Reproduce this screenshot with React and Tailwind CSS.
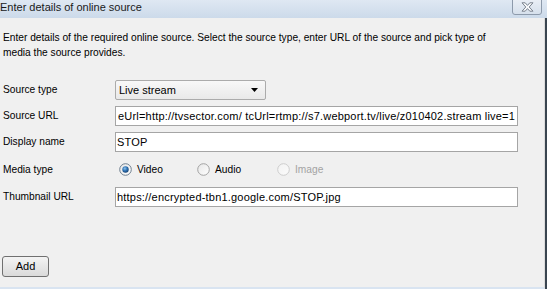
import React from "react";

function Radio({ checked, disabled }) {
  return (
    <svg width="13" height="13" viewBox="0 0 13 13" className="shrink-0">
      <defs>
        <linearGradient id={disabled ? "rgD" : "rgN"} x1="0" y1="0" x2="1" y2="1">
          <stop offset="0" stopColor={disabled ? "#f2f2f2" : "#e6e6e6"} />
          <stop offset="1" stopColor={disabled ? "#fbfbfb" : "#ffffff"} />
        </linearGradient>
        <radialGradient id="rgDot" cx="0.4" cy="0.35" r="0.7">
          <stop offset="0" stopColor="#8fc4ee" />
          <stop offset="0.5" stopColor="#2f73b4" />
          <stop offset="1" stopColor="#163f6e" />
        </radialGradient>
      </defs>
      <circle
        cx="6.5"
        cy="6.5"
        r="5.8"
        fill={`url(#${disabled ? "rgD" : "rgN"})`}
        stroke={disabled ? "#cdcdcd" : checked ? "#6f7f8f" : "#a3a3a3"}
        strokeWidth="1"
      />
      {checked && <circle cx="6.5" cy="6.5" r="3.2" fill="url(#rgDot)" />}
    </svg>
  );
}

function Field({ children, alignEnd }) {
  return (
    <div
      className={`h-[20px] w-[403px] bg-white border border-[#a5a5a5] flex items-center overflow-hidden whitespace-nowrap pl-[1px] pr-[2px] text-[11px] tracking-[0.2px] ${
        alignEnd ? "justify-end" : ""
      }`}
    >
      <span className="shrink-0">{children}</span>
    </div>
  );
}

function Row({ label, children, h = "h-[20px]" }) {
  return (
    <div className={`flex items-center ${h}`}>
      <div className="w-[115px] pl-[3px] shrink-0">{label}</div>
      {children}
    </div>
  );
}

export default function App() {
  return (
    <div className="w-[547px] h-[289px] flex flex-col overflow-hidden font-['Liberation_Sans',Arial,sans-serif] text-[10.2px] text-black bg-[#f0f0f0]">
      {/* Title bar */}
      <div className="h-[18px] shrink-0 flex items-center bg-gradient-to-b from-[#dfe8f3] to-[#ccdaea] relative">
        <span className="text-[11px] text-[#1a1a1a] leading-none -mt-[3px]">
          Enter details of online source
        </span>
        <div className="absolute left-[512px] top-[-1px] w-[30px] h-[16px] rounded-b-[3px] border border-[#8d9aab] bg-gradient-to-b from-[#e9eef5] to-[#d6e0ec] flex items-center justify-center">
          <svg width="13" height="10" viewBox="0 0 13 10">
            <path
              d="M1 0.8 H4.2 L6.5 3.4 L8.8 0.8 H12 L8.2 5 L12 9.2 H8.8 L6.5 6.6 L4.2 9.2 H1 L4.8 5 Z"
              fill="#f7f8fa"
              stroke="#6f7885"
              strokeWidth="0.9"
              strokeLinejoin="round"
            />
          </svg>
        </div>
      </div>

      {/* Body */}
      <div className="flex-1 flex min-h-0">
        <div className="flex-1 flex flex-col border-r border-[#dcdcdc] border-b-2 border-b-[#d9e4f1]">
          <p className="pl-[3px] pt-[12px] leading-[15px]">
            Enter details of the required online source. Select the source type, enter URL of the source and pick type of
            <br />
            media the source provides.
          </p>

          <div className="mt-[20px] flex flex-col gap-[6px]">
            <Row label="Source type">
              <div className="h-[20px] w-[151px] rounded-[2px] border border-[#ababab] bg-gradient-to-b from-[#f8f8f8] to-[#e9e9e9] flex items-center justify-between pl-[3px] pr-[7px] text-[11px]">
                <span>Live stream</span>
                <svg width="7" height="4" viewBox="0 0 7 4">
                  <path d="M0 0 H7 L3.5 4 Z" fill="#000" />
                </svg>
              </div>
            </Row>
            <Row label="Source URL">
              <Field alignEnd>
                eUrl=http://tvsector.com/ tcUrl=rtmp://s7.webport.tv/live/z010402.stream live=1
              </Field>
            </Row>
            <Row label="Display name">
              <Field>STOP</Field>
            </Row>
            <Row label="Media type" h="h-[23px]">
              <div className="flex items-center">
                <div className="flex items-center w-[78px] pl-[4px] gap-[5px]">
                  <Radio checked />
                  <span>Video</span>
                </div>
                <div className="flex items-center w-[80px] pl-[4px] gap-[5px]">
                  <Radio />
                  <span>Audio</span>
                </div>
                <div className="flex items-center pl-[4px] gap-[5px]">
                  <Radio disabled />
                  <span className="text-[#a3a3a3]">Image</span>
                </div>
              </div>
            </Row>
            <Row label="Thumbnail URL">
              <Field>https://encrypted-tbn1.google.com/STOP.jpg</Field>
            </Row>
          </div>

          <div className="mt-auto pl-[2px] pb-[10px]">
            <button className="w-[47px] h-[21px] rounded-[3px] border border-[#707070] bg-gradient-to-b from-[#f4f4f4] to-[#dadada] flex items-center justify-center text-[11px] text-black">
              Add
            </button>
          </div>
        </div>
        <div className="w-[2px] bg-[#3a4550] shrink-0" />
      </div>
    </div>
  );
}
